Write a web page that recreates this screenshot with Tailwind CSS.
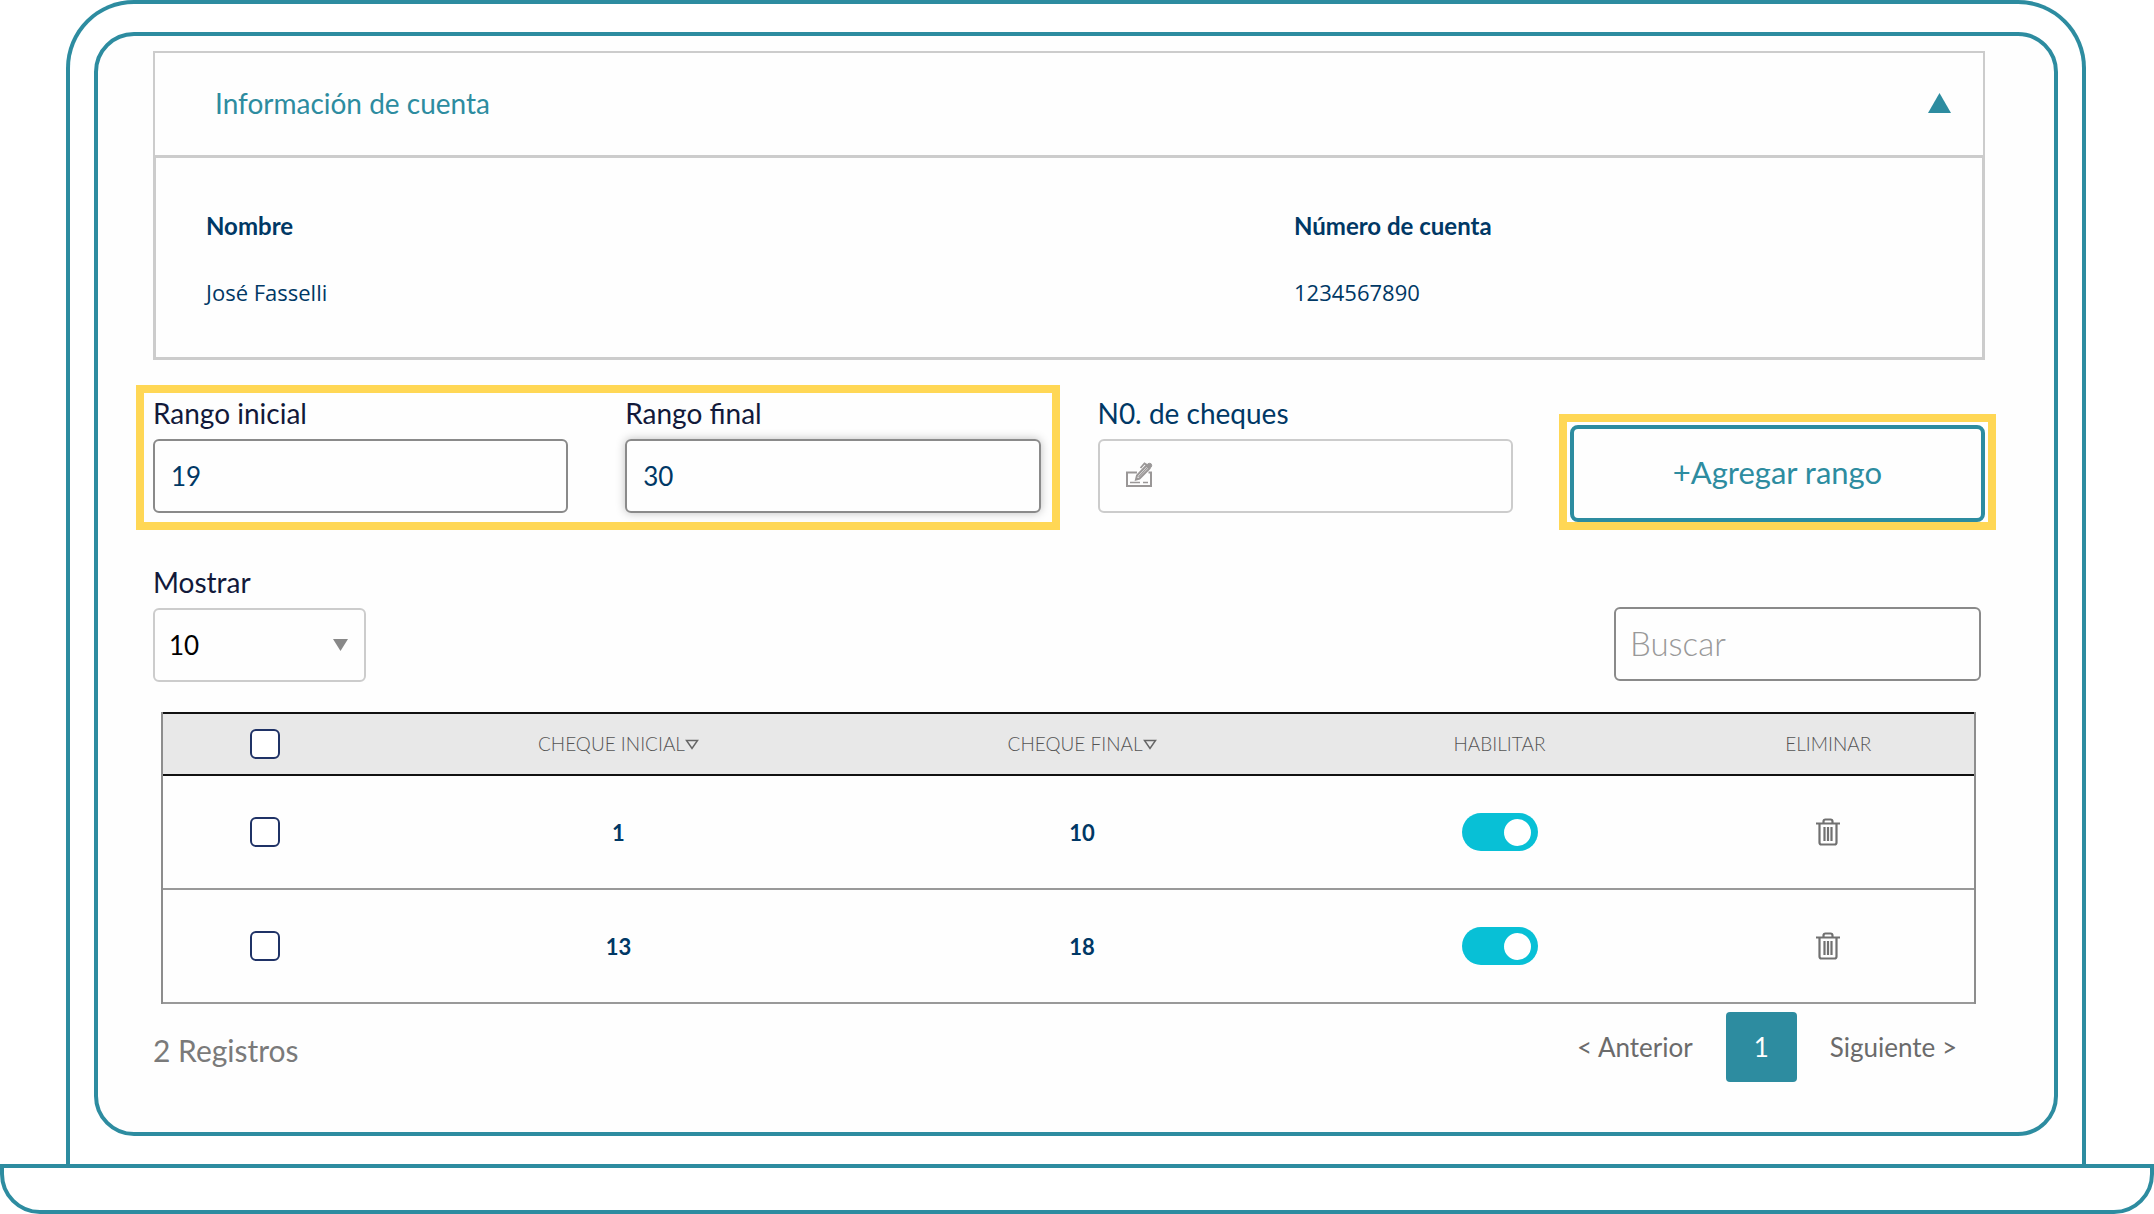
<!DOCTYPE html>
<html lang="es">
<head>
<meta charset="utf-8">
<title>Información de cuenta</title>
<script src="https://cdn.jsdelivr.net/npm/@tailwindcss/browser@4"></script>
</head>
<body class="bg-white font-['Lato',sans-serif] text-[#12193a]">
<div class="ml-[66px] mr-[68px] rounded-t-[68px] border-x-4 border-t-4 border-[#2d8ca0] px-6 py-7">
  <main class="rounded-[40px] border-4 border-[#2d8ca0] bg-[#fefefe] pt-[15px] pr-[69px] pb-[50px] pl-[55px]">

    <section>
      <header class="flex h-[104px] items-center justify-between border-x-2 border-t-2 border-[#ccc] pr-8 pb-[3px] pl-[60px]">
        <h1 class="text-[28px] leading-9 text-[#2d8ca0]">Información de cuenta</h1>
        <button type="button" aria-label="Contraer" class="text-[#2d8ca0]">
          <svg class="block h-5 w-[23px]" viewBox="0 0 23 20" fill="currentColor"><path d="M11.5 0 23 20H0z"/></svg>
        </button>
      </header>
      <dl class="grid grid-cols-[1088fr_688fr] border-3 border-[#ccc] pt-[50px] pb-[47px] pl-[50px] text-[#003865]">
        <div class="flex flex-col gap-[30px]">
          <dt class="text-2xl leading-9 font-bold">Nombre</dt>
          <dd class="font-['Open_Sans',sans-serif] text-[22px] leading-9">José Fasselli</dd>
        </div>
        <div class="flex flex-col gap-[30px]">
          <dt class="text-2xl leading-9 font-bold">Número de cuenta</dt>
          <dd class="font-['Open_Sans',sans-serif] text-[22px] leading-9">1234567890</dd>
        </div>
      </dl>
    </section>

    <form class="mt-[25px] grid grid-cols-4 gap-[57px]">
      <div class="col-span-2 -mr-[19px] -ml-[17px] grid grid-cols-2 gap-[57px] border-8 border-[#ffd755] pt-0.5 pr-[11px] pb-[9px] pl-[9px]">
        <div class="flex flex-col gap-2">
          <label for="ini" class="text-[28px] leading-9">Rango inicial</label>
          <input id="ini" value="19" class="h-[74px] w-full rounded-md border-2 border-[#8a8a8a] px-4 text-[26px] text-[#003865]">
        </div>
        <div class="flex flex-col gap-2">
          <label for="fin" class="text-[28px] leading-9">Rango final</label>
          <input id="fin" value="30" class="h-[74px] w-full rounded-md border-2 border-[#8a8a8a] px-4 text-[26px] text-[#003865] shadow-[0_0_10px_rgba(0,0,0,0.25)]">
        </div>
      </div>
      <div class="flex flex-col gap-2 pt-2.5">
        <label for="num" class="text-[28px] leading-9 text-[#003865]">N0. de cheques</label>
        <div class="flex h-[74px] items-center gap-3 rounded-md border-2 border-[#ccc] pr-4 pb-0.5 pl-[26px]">
          <svg class="h-[26px] w-7 shrink-0" viewBox="0 0 28 26" fill="none" stroke="#9a9797" stroke-width="2">
            <path d="M11 10.5H1V24H25V10.500H22.500"/>
            <path d="M4 20.500H14M17 20.500H22" stroke-width="1.500"/>
            <path d="M10 17.500 11 13.500 20.500 3.500 23.500 6.500 13.500 16.500z" stroke-width="2"/>
            <path d="M12.500 15 21.500 5.500" stroke-width="1.200"/>
            <path d="M14.500 6 18.500 1.500 21 3" stroke-width="1.800"/>
            <circle cx="23.500" cy="3.500" r="2.200" fill="#9a9797" stroke-width="1"/>
          </svg>
          <input id="num" class="h-full w-full text-[26px] text-[#003865]">
        </div>
      </div>
      <div class="-mx-[11px] self-end border-8 border-[#ffd755] bg-white px-[3px] pt-[3px]">
        <button type="button" class="block h-[97px] w-full rounded-lg border-4 border-[#2d8ca0] bg-[#fefefe] pb-0.5 text-[31px] text-[#2d8ca0]">+Agregar rango</button>
      </div>
    </form>

    <div class="mt-[34px] flex items-end justify-between">
      <div class="flex flex-col gap-2">
        <label for="mostrar" class="text-[28px] leading-9">Mostrar</label>
        <div class="relative w-[213px]">
          <select id="mostrar" class="h-[74px] w-full appearance-none rounded-md border-2 border-[#ccc] px-3.5 text-[26px] text-black"><option>10</option></select>
          <svg class="pointer-events-none absolute top-[31px] right-[18px] h-3 w-[15px]" viewBox="0 0 15 12" fill="#888"><path d="M0 0H15L7.500 12z"/></svg>
        </div>
      </div>
      <input type="search" aria-label="Buscar" placeholder="Buscar" class="mr-1 mb-px h-[74px] w-[367px] rounded-md border-2 border-[#8a8a8a] px-3.5 pb-0.5 text-[33px] font-light placeholder:text-[#999]">
    </div>

    <div class="mt-[30px] mr-[9px] ml-2">
      <table class="w-full table-fixed border-separate border-spacing-0 border-r-2 border-l-2 border-[#8d8d8d] text-center">
        <thead class="text-[19px] text-[#555]">
          <tr class="h-16 bg-[#e8e8e8]">
            <th class="w-[12.5%] border-y-2 border-[#111] p-0 pr-[22px]"><input type="checkbox" aria-label="Seleccionar todo" class="block mx-auto size-[30px] appearance-none rounded-[6px] border-2 border-[#1f3266] bg-white"></th>
            <th class="w-[25.3%] border-y-2 border-[#111] p-0 font-light"><span class="inline-flex items-center">CHEQUE INICIAL<svg class="h-[11px] w-[14px]" viewBox="0 0 14 11" fill="none" stroke="#666" stroke-width="1.500"><path d="M1.500 1.500H12.500L7 9.500z"/></svg></span></th>
            <th class="w-[25.9%] border-y-2 border-[#111] p-0 font-light"><span class="inline-flex items-center">CHEQUE FINAL<svg class="h-[11px] w-[14px]" viewBox="0 0 14 11" fill="none" stroke="#666" stroke-width="1.500"><path d="M1.500 1.500H12.500L7 9.500z"/></svg></span></th>
            <th class="w-[20.2%] border-y-2 border-[#111] p-0 font-light">HABILITAR</th>
            <th class="w-[16.1%] border-y-2 border-[#111] p-0 font-light">ELIMINAR</th>
          </tr>
        </thead>
        <tbody class="text-[22px] font-bold text-[#003865]">
          <tr class="h-[114px]">
            <td class="border-b-2 border-[#999] p-0 pr-[22px]"><input type="checkbox" aria-label="Seleccionar 1 a 10" class="block mx-auto size-[30px] appearance-none rounded-[6px] border-2 border-[#1f3266] bg-white"></td>
            <td class="border-b-2 border-[#999] p-0">1</td>
            <td class="border-b-2 border-[#999] p-0">10</td>
            <td class="border-b-2 border-[#999] p-0"><input type="checkbox" role="switch" checked aria-label="Habilitar 1 a 10" class="mx-auto flex h-[38px] w-[76px] appearance-none items-center justify-end rounded-full bg-[#08c0d6] pr-[7px] pl-2 before:block before:size-[27px] before:rounded-full before:bg-white"></td>
            <td class="border-b-2 border-[#999] p-0"><button type="button" aria-label="Eliminar 1 a 10" class="block mx-auto"><svg class="block h-7 w-6" viewBox="0 0 24 28" fill="none" stroke="#707070" stroke-width="2.200"><path d="M0 5.500H24M7.500 5V3.500Q7.500 1.500 9.500 1.500H14.500Q16.500 1.500 16.500 3.500V5M3.500 5.500V24.500Q3.500 26.500 5.500 26.500H18.500Q20.500 26.500 20.500 24.500V5.500"/><path d="M8.500 9V23M12 9V23M15.500 9V23"/></svg></button></td>
          </tr>
          <tr class="h-[114px]">
            <td class="border-b-2 border-[#999] p-0 pr-[22px]"><input type="checkbox" aria-label="Seleccionar 13 a 18" class="block mx-auto size-[30px] appearance-none rounded-[6px] border-2 border-[#1f3266] bg-white"></td>
            <td class="border-b-2 border-[#999] p-0">13</td>
            <td class="border-b-2 border-[#999] p-0">18</td>
            <td class="border-b-2 border-[#999] p-0"><input type="checkbox" role="switch" checked aria-label="Habilitar 13 a 18" class="mx-auto flex h-[38px] w-[76px] appearance-none items-center justify-end rounded-full bg-[#08c0d6] pr-[7px] pl-2 before:block before:size-[27px] before:rounded-full before:bg-white"></td>
            <td class="border-b-2 border-[#999] p-0"><button type="button" aria-label="Eliminar 13 a 18" class="block mx-auto"><svg class="block h-7 w-6" viewBox="0 0 24 28" fill="none" stroke="#707070" stroke-width="2.200"><path d="M0 5.500H24M7.500 5V3.500Q7.500 1.500 9.500 1.500H14.500Q16.500 1.500 16.500 3.500V5M3.500 5.500V24.500Q3.500 26.500 5.500 26.500H18.500Q20.500 26.500 20.500 24.500V5.500"/><path d="M8.500 9V23M12 9V23M15.500 9V23"/></svg></button></td>
          </tr>
        </tbody>
      </table>
    </div>

    <footer class="mt-2 flex items-center justify-between">
      <p class="pt-1.5 text-[30px] leading-9 text-[#7a7a7a]">2 Registros</p>
      <nav aria-label="Paginación" class="mr-7 flex items-center gap-[33px] text-[26px] text-[#6b6b6b]">
        <a href="#">&lt; Anterior</a>
        <a href="#" aria-current="page" class="flex h-[70px] w-[71px] items-center justify-center rounded-[4px] bg-[#2d8ca0] text-white">1</a>
        <a href="#">Siguiente &gt;</a>
      </nav>
    </footer>
  </main>
</div>
<div class="h-[50px] rounded-b-[40px] border-4 border-[#2d8ca0]"></div>
</body>
</html>
